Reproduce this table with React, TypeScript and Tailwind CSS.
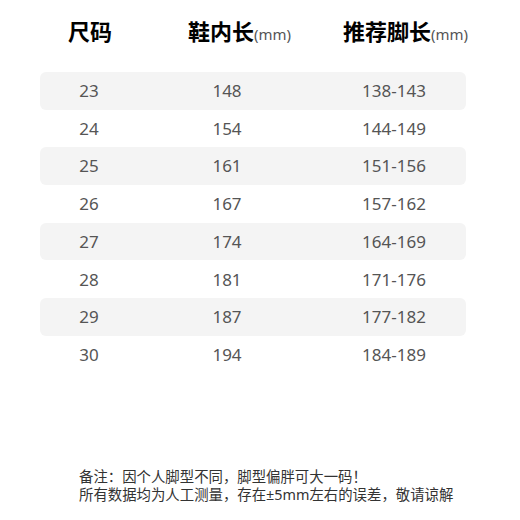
const rows: [string, string, string][] = [
  ["23", "148", "138-143"],
  ["24", "154", "144-149"],
  ["25", "161", "151-156"],
  ["26", "167", "157-162"],
  ["27", "174", "164-169"],
  ["28", "181", "171-176"],
  ["29", "187", "177-182"],
  ["30", "194", "184-189"],
];

export default function App() {
  return (
    <div
      className="w-[520px] h-[520px] bg-white relative overflow-hidden"
      style={{ fontFamily: '"Noto Sans", "Noto Sans CJK SC", sans-serif' }}
    >
      <div className="grid grid-cols-[120px_155px_auto] pl-[68px] pt-[16px] h-[46px] items-center text-[22px] font-bold text-black leading-none">
        <div>尺码</div>
        <div className="flex items-baseline">
          <span>鞋内长</span>
          <span className="text-[15px] font-normal text-[#555]">(mm)</span>
        </div>
        <div className="flex items-baseline">
          <span>推荐脚长</span>
          <span className="text-[15px] font-normal text-[#555]">(mm)</span>
        </div>
      </div>
      <div className="ml-[40px] mt-[26px] w-[426px] flex flex-col">
        {rows.map((r, i) => (
          <div
            key={r[0]}
            className={`h-[37.7px] rounded-[6px] grid grid-cols-[98px_178px_156px] items-center text-[17px] text-[#555] ${
              i % 2 === 0 ? "bg-[#f4f4f4]" : "bg-white"
            }`}
          >
            <div className="text-center">{r[0]}</div>
            <div className="text-center">{r[1]}</div>
            <div className="text-center">{r[2]}</div>
          </div>
        ))}
      </div>
      <div className="absolute left-[79px] top-[468px] text-[14.4px] leading-[18px] text-[#333] whitespace-nowrap">
        <div>备注：因个人脚型不同，脚型偏胖可大一码！</div>
        <div>所有数据均为人工测量，存在±5mm左右的误差，敬请谅解</div>
      </div>
    </div>
  );
}
